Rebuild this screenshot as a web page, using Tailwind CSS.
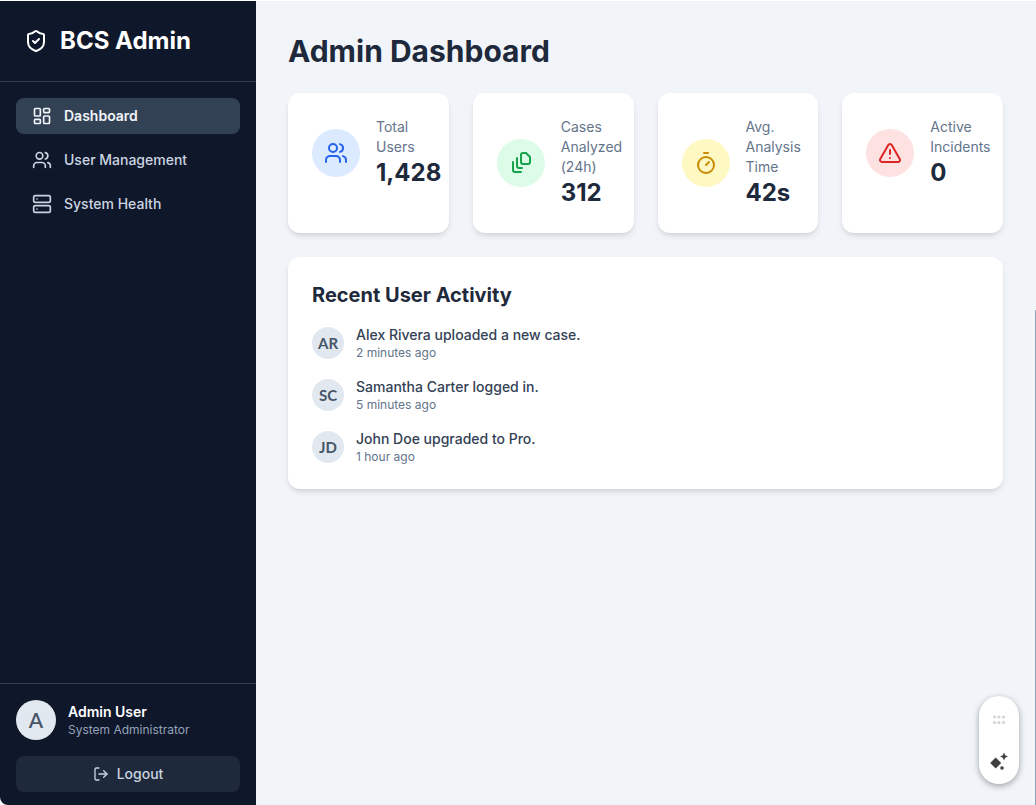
<!DOCTYPE html>
<html>
<head>
	<title>BCS Admin</title>
	<meta charset="UTF-8"/>
	<script src="https://cdn.jsdelivr.net/npm/@tailwindcss/browser@4"></script>
</head>
<body class="h-[805px] overflow-hidden bg-white font-['Inter',sans-serif]">
	<div class="flex h-[805px] pt-px">
		<!-- Sidebar -->
		<aside class="flex w-64 shrink-0 flex-col rounded-bl-lg bg-[#0f172a] text-white">
			<div class="flex h-[81px] items-center gap-3 border-b border-[#334155] px-6">
				<svg xmlns="http://www.w3.org/2000/svg" width="24" height="24" viewBox="0 0 24 24" fill="none" stroke="currentColor" stroke-width="2" stroke-linecap="round" stroke-linejoin="round"><path d="M20 13c0 5-3.5 7.5-7.66 8.95a1 1 0 0 1-.67-.01C7.5 20.5 4 18 4 13V6a1 1 0 0 1 1-1c2 0 4.5-1.2 6.24-2.72a1.17 1.17 0 0 1 1.52 0C14.51 3.81 17 5 19 5a1 1 0 0 1 1 1z"/><path d="m9 12 2 2 4-4"/></svg>
				<span class="text-2xl font-bold">BCS Admin</span>
			</div>
			<nav class="flex flex-1 flex-col gap-2 p-4">
				<a class="flex h-9 items-center gap-3 rounded-lg bg-[#334155] px-4 text-sm font-semibold text-[#f1f5f9]">
					<svg xmlns="http://www.w3.org/2000/svg" width="20" height="20" viewBox="0 0 24 24" fill="none" stroke="currentColor" stroke-width="2" stroke-linecap="round" stroke-linejoin="round"><rect width="7" height="9" x="3" y="3" rx="1"/><rect width="7" height="5" x="14" y="3" rx="1"/><rect width="7" height="9" x="14" y="12" rx="1"/><rect width="7" height="5" x="3" y="16" rx="1"/></svg>
					Dashboard
				</a>
				<a class="flex h-9 items-center gap-3 rounded-lg px-4 text-sm font-medium text-[#cbd5e1]">
					<svg xmlns="http://www.w3.org/2000/svg" width="20" height="20" viewBox="0 0 24 24" fill="none" stroke="currentColor" stroke-width="2" stroke-linecap="round" stroke-linejoin="round"><path d="M16 21v-2a4 4 0 0 0-4-4H6a4 4 0 0 0-4 4v2"/><circle cx="9" cy="7" r="4"/><path d="M22 21v-2a4 4 0 0 0-3-3.87"/><path d="M16 3.13a4 4 0 0 1 0 7.75"/></svg>
					User Management
				</a>
				<a class="flex h-9 items-center gap-3 rounded-lg px-4 text-sm font-medium text-[#cbd5e1]">
					<svg xmlns="http://www.w3.org/2000/svg" width="20" height="20" viewBox="0 0 24 24" fill="none" stroke="currentColor" stroke-width="2" stroke-linecap="round" stroke-linejoin="round"><rect width="20" height="8" x="2" y="2" rx="2" ry="2"/><rect width="20" height="8" x="2" y="14" rx="2" ry="2"/><line x1="6" x2="6.01" y1="6" y2="6"/><line x1="6" x2="6.01" y1="18" y2="18"/></svg>
					System Health
				</a>
			</nav>
			<div class="border-t border-[#334155] p-4 pb-[13px]">
				<div class="flex items-center gap-3">
					<div class="flex size-10 items-center justify-center rounded-full bg-[#e2e8f0] font-['Lato',sans-serif] text-[21px] font-semibold text-[#475569]">A</div>
					<div>
						<p class="text-sm leading-5 font-semibold text-white">Admin User</p>
						<p class="text-xs leading-4 text-[#94a3b8]">System Administrator</p>
					</div>
				</div>
				<button class="mt-4 flex h-9 w-full items-center justify-center gap-2 rounded-lg bg-[#1e293b] text-sm font-medium text-[#cbd5e1]">
					<svg xmlns="http://www.w3.org/2000/svg" width="16" height="16" viewBox="0 0 24 24" fill="none" stroke="currentColor" stroke-width="2" stroke-linecap="round" stroke-linejoin="round"><path d="M9 21H5a2 2 0 0 1-2-2V5a2 2 0 0 1 2-2h4"/><polyline points="16 17 21 12 16 7"/><line x1="21" x2="9" y1="12" y2="12"/></svg>
					Logout
				</button>
			</div>
		</aside>

		<!-- Contenu -->
		<main class="relative flex-1 bg-[#f1f5f9] pt-8 pr-[33px] pb-8 pl-8">
			<h1 class="text-3xl font-bold text-[#1e293b]">Admin Dashboard</h1>

			<div class="mt-6 grid grid-cols-4 gap-6">
				<div class="rounded-xl bg-white p-6 shadow-md">
					<div class="flex items-center gap-4">
						<div class="flex size-12 shrink-0 items-center justify-center rounded-full bg-[#dbeafe] text-[#2563eb]">
							<svg xmlns="http://www.w3.org/2000/svg" width="24" height="24" viewBox="0 0 24 24" fill="none" stroke="currentColor" stroke-width="2" stroke-linecap="round" stroke-linejoin="round"><path d="M16 21v-2a4 4 0 0 0-4-4H6a4 4 0 0 0-4 4v2"/><circle cx="9" cy="7" r="4"/><path d="M22 21v-2a4 4 0 0 0-3-3.87"/><path d="M16 3.13a4 4 0 0 1 0 7.75"/></svg>
						</div>
						<div>
							<p class="text-sm leading-5 text-[#64748b]">Total Users</p>
							<p class="text-2xl font-bold text-[#1e293b]">1,428</p>
						</div>
					</div>
				</div>
				<div class="rounded-xl bg-white p-6 shadow-md">
					<div class="flex items-center gap-4">
						<div class="flex size-12 shrink-0 items-center justify-center rounded-full bg-[#dcfce7] text-[#16a34a]">
							<svg xmlns="http://www.w3.org/2000/svg" width="24" height="24" viewBox="0 0 24 24" fill="none" stroke="currentColor" stroke-width="2" stroke-linecap="round" stroke-linejoin="round"><path d="M17 2h-3a2 2 0 0 0-2 2v7a2 2 0 0 0 2 2h5a2 2 0 0 0 2-2V6z"/><path d="M8 7v8a2 2 0 0 0 2 2h3"/><path d="M4 11v8a2 2 0 0 0 2 2h6"/></svg>
						</div>
						<div>
							<p class="text-sm leading-5 text-[#64748b]">Cases Analyzed (24h)</p>
							<p class="text-2xl font-bold text-[#1e293b]">312</p>
						</div>
					</div>
				</div>
				<div class="rounded-xl bg-white p-6 shadow-md">
					<div class="flex items-center gap-4">
						<div class="flex size-12 shrink-0 items-center justify-center rounded-full bg-[#fef9c3] text-[#ca8a04]">
							<svg xmlns="http://www.w3.org/2000/svg" width="24" height="24" viewBox="0 0 24 24" fill="none" stroke="currentColor" stroke-width="2" stroke-linecap="round" stroke-linejoin="round"><line x1="10" x2="14" y1="2" y2="2"/><line x1="12" x2="15" y1="14" y2="11"/><circle cx="12" cy="14" r="8"/></svg>
						</div>
						<div>
							<p class="text-sm leading-5 text-[#64748b]">Avg. Analysis Time</p>
							<p class="text-2xl font-bold text-[#1e293b]">42s</p>
						</div>
					</div>
				</div>
				<div class="rounded-xl bg-white p-6 shadow-md">
					<div class="flex items-center gap-4">
						<div class="flex size-12 shrink-0 items-center justify-center rounded-full bg-[#fee2e2] text-[#dc2626]">
							<svg xmlns="http://www.w3.org/2000/svg" width="24" height="24" viewBox="0 0 24 24" fill="none" stroke="currentColor" stroke-width="2" stroke-linecap="round" stroke-linejoin="round"><path d="m21.73 18-8-14a2 2 0 0 0-3.48 0l-8 14A2 2 0 0 0 4 21h16a2 2 0 0 0 1.73-3"/><path d="M12 9v4"/><path d="M12 17h.01"/></svg>
						</div>
						<div>
							<p class="text-sm leading-5 text-[#64748b]">Active Incidents</p>
							<p class="text-2xl font-bold text-[#1e293b]">0</p>
						</div>
					</div>
				</div>
			</div>

			<div class="mt-6 rounded-xl bg-white p-6 shadow-md">
				<h2 class="text-xl font-bold text-[#1e293b]">Recent User Activity</h2>
				<ul class="mt-4 flex flex-col gap-4">
					<li class="flex items-center gap-3">
						<div class="flex size-8 items-center justify-center rounded-full bg-[#e2e8f0] font-['Lato',sans-serif] text-[15px] font-bold text-[#475569]">AR</div>
						<div>
							<p class="text-sm leading-5 font-medium text-[#334155]">Alex Rivera uploaded a new case.</p>
							<p class="text-xs leading-4 text-[#64748b]">2 minutes ago</p>
						</div>
					</li>
					<li class="flex items-center gap-3">
						<div class="flex size-8 items-center justify-center rounded-full bg-[#e2e8f0] font-['Lato',sans-serif] text-[15px] font-bold text-[#475569]">SC</div>
						<div>
							<p class="text-sm leading-5 font-medium text-[#334155]">Samantha Carter logged in.</p>
							<p class="text-xs leading-4 text-[#64748b]">5 minutes ago</p>
						</div>
					</li>
					<li class="flex items-center gap-3">
						<div class="flex size-8 items-center justify-center rounded-full bg-[#e2e8f0] font-['Lato',sans-serif] text-[15px] font-bold text-[#475569]">JD</div>
						<div>
							<p class="text-sm leading-5 font-medium text-[#334155]">John Doe upgraded to Pro.</p>
							<p class="text-xs leading-4 text-[#64748b]">1 hour ago</p>
						</div>
					</li>
				</ul>
			</div>

			<!-- Trait a droite -->
			<div class="absolute top-[309px] right-0 bottom-0 w-px bg-[#94a3b8]"></div>

			<!-- Widget flottant -->
			<div class="absolute right-[17px] bottom-[21px] flex h-[88px] w-10 flex-col items-center justify-between rounded-full bg-white pt-[19px] pb-[12px] shadow-[0_2px_6px_rgba(0,0,0,0.35)]">
				<svg xmlns="http://www.w3.org/2000/svg" width="14" height="10" viewBox="0 0 14 10" fill="#d4d4d4"><circle cx="2.5" cy="2" r="1.6"/><circle cx="7" cy="2" r="1.6"/><circle cx="11.5" cy="2" r="1.6"/><circle cx="2.5" cy="7.5" r="1.6"/><circle cx="7" cy="7.5" r="1.6"/><circle cx="11.5" cy="7.5" r="1.6"/></svg>
				<svg xmlns="http://www.w3.org/2000/svg" width="20" height="20" viewBox="0 0 20 20" fill="#404040"><path d="M6.7 5.5l5.5 5.5-5.5 5.5L1.2 11z"/><path d="M15 .5l1.2 2.8 2.8 1.2-2.8 1.2L15 8.5l-1.2-2.8L11 4.5l2.8-1.2z"/><circle cx="13" cy="16" r="1.8"/></svg>
			</div>
		</main>
	</div>
</body>
</html>
